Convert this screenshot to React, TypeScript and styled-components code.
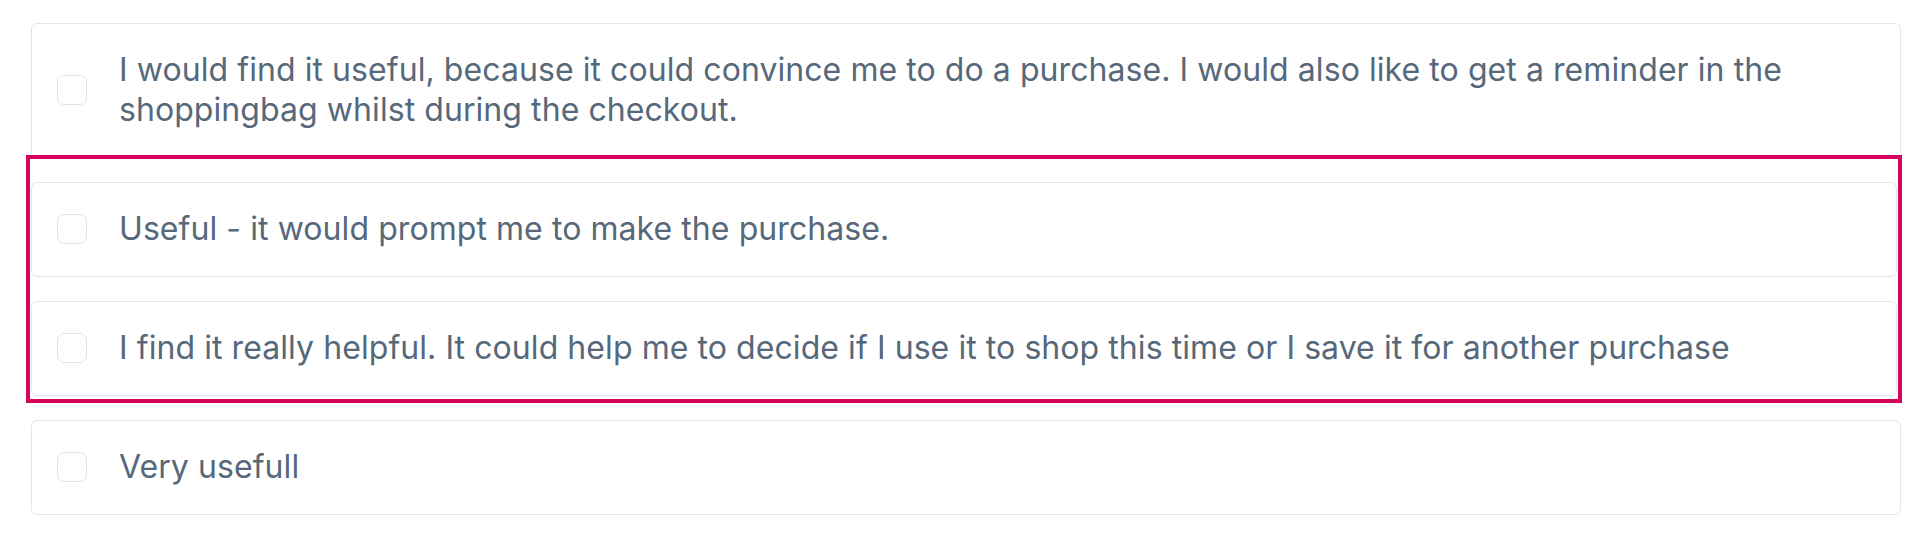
import styled, { createGlobalStyle } from "styled-components";

const GlobalStyle = createGlobalStyle`
  html, body {
    margin: 0;
    padding: 0;
    background: #ffffff;
  }

  body {
    font-family: Inter, "Noto Sans", "Liberation Sans", sans-serif;
  }
`

const Page = styled.main`
  padding: 23px 19px 21px 31px;
`

// the pink outline round the two grouped answers
const Highlight = styled.div`
  display: flex;
  flex-direction: column;
  gap: 24px;
  margin: -3px -1px 17px -5px;
  padding: 23px 1px 3px 1px;
  border: 4px solid #d6045d;
`

const Card = styled.label`
  display: flex;
  align-items: center;
  gap: 32px;
  padding: 26px 40px 27px 25px;
  border: 1px solid #e2e6ec;
  border-radius: 6px;
  background: #ffffff;
  cursor: pointer;
`

const Box = styled.span`
  flex: 0 0 auto;
  width: 28px;
  height: 28px;
  border: 1.5px solid #dfe4eb;
  border-radius: 7px;
  background: #ffffff;
`

const Text = styled.span`
  font-size: 32px;
  line-height: 40px;
  letter-spacing: 0.07px;
  color: #56687a;
`

function Option({ text }: { text: string }) {
  return (
    <Card>
      <Box />
      <Text>{text}</Text>
    </Card>
  )
}

export default function App() {
  return (
    <>
      <GlobalStyle />
      <Page>
        <Option text="I would find it useful, because it could convince me to do a purchase. I would also like to get a reminder in the shoppingbag whilst during the checkout." />
        <Highlight>
          <Option text="Useful - it would prompt me to make the purchase." />
          <Option text="I find it really helpful. It could help me to decide if I use it to shop this time or I save it for another purchase" />
        </Highlight>
        <Option text="Very usefull" />
      </Page>
    </>
  )
}
